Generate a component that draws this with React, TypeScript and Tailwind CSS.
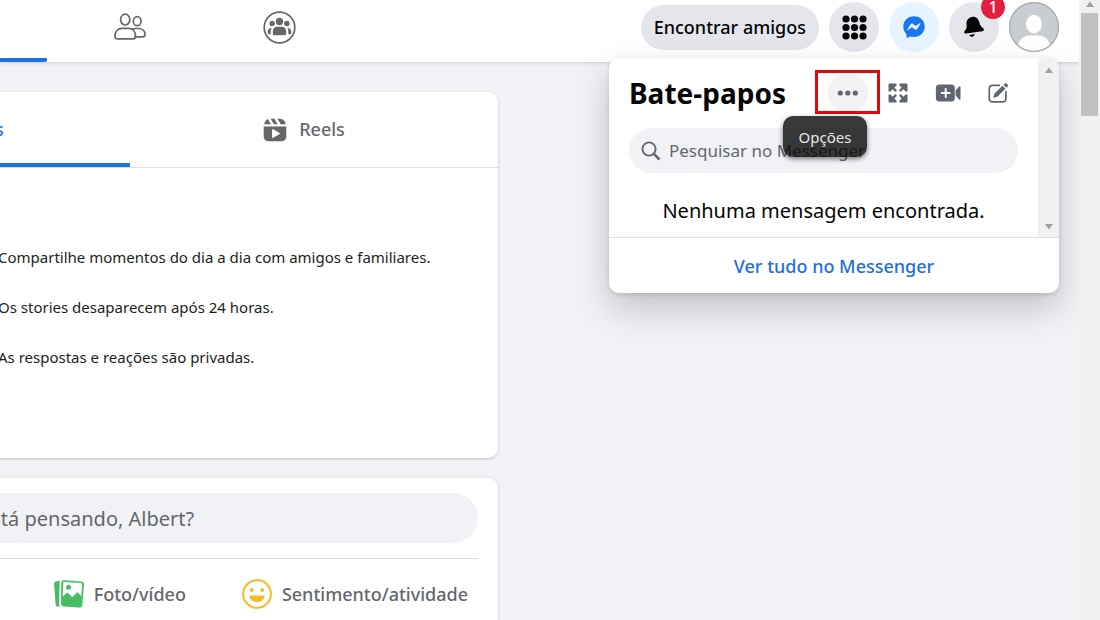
import type { ReactNode } from "react";

function FriendsIcon() {
  return (
    <svg viewBox="0 0 34 30" className="h-[30px] w-[34px]" fill="none" stroke="#65676b" strokeWidth="1.7" strokeLinejoin="round">
      <ellipse cx="12.2" cy="7.6" rx="4.6" ry="5.4" />
      <ellipse cx="24.2" cy="9.2" rx="3.9" ry="4.5" />
      <path d="M9 16.4h6.5c4.200 0 7 3.200 7 7.600 0 2-.7 2.900-2.600 2.900H4.600C2.700 26.900 2 26 2 24c0-4.400 2.800-7.600 7-7.600z" />
      <path d="M19 17.200c.9-.5 2-.7 3.100-.7h3.200c4 0 6.700 2.500 6.700 6 0 1.600-.6 2.300-2.200 2.300h-7.400" />
    </svg>
  );
}

function GroupsIcon() {
  return (
    <svg viewBox="0 0 34 34" className="h-[34px] w-[34px]" fill="#65676b">
      <circle cx="17.500" cy="17.500" r="15.300" fill="none" stroke="#65676b" strokeWidth="1.700" />
      <circle cx="17.500" cy="11.500" r="3.700" />
      <circle cx="10.100" cy="13.500" r="2.700" />
      <circle cx="24.900" cy="13.500" r="2.700" />
      <path d="M15 16.800h5c2.400 0 4.200 2 4.200 4.700v2c0 1.200-.6 1.800-1.800 1.800h-9.800c-1.200 0-1.800-.6-1.800-1.800v-2c0-2.700 1.800-4.700 4.200-4.700z" />
      <path d="M9.600 17.900c-2.300 0-3.900 1.500-3.900 3.800v1.100c0 1 .5 1.400 1.400 1.400h1.600v-2.700c0-1.300.3-2.600.9-3.600zM25.400 17.900c2.300 0 3.900 1.500 3.900 3.800v1.100c0 1-.5 1.400-1.400 1.400h-1.600v-2.700c0-1.300-.3-2.600-.9-3.600z" />
    </svg>
  );
}

function AppsIcon() {
  return (
    <svg viewBox="0 0 26 26" className="h-[26px] w-[26px]" fill="#050505">
      {[5, 13.5, 22].map((y) =>
        [5, 13.5, 22].map((x) => <circle key={x + "-" + y} cx={x} cy={y} r="3.600" />)
      )}
    </svg>
  );
}

function MessengerIcon() {
  return (
    <svg viewBox="0 0 22 22" className="h-[22px] w-[22px]">
      <path fill="#1876f2" d="M11 .3C4.900.3.3 4.800.3 10.500c0 3.100 1.200 5.800 3.200 7.600v2.800c0 .6.6 1 1.100.8l2.700-1.200c1.200.3 2.400.5 3.700.5 6.100 0 10.700-4.600 10.700-10.500S17.100.3 11 .3z" />
      <path fill="#e7f3ff" d="M4.300 13.400l3.300-5.100c.5-.8 1.600-1 2.300-.4l2.500 1.800c.2.200.5.200.8 0l3.400-2.500c.5-.3 1 .2.7.7l-3.200 5c-.5.8-1.600 1-2.300.4l-2.500-1.800c-.2-.2-.5-.2-.8 0L5 14.100c-.5.3-1.100-.2-.7-.7z" />
    </svg>
  );
}

function BellIcon() {
  return (
    <svg viewBox="0 0 22 22" className="h-[22px] w-[22px]" fill="#050505">
      <path d="M8.700 1C5 2 3 5 3.600 8.500c.5 3.200-.2 4.300-1.800 6.200-1.300 1.500-.5 3.100 1.400 2.900L19.300 15.200c1.900-.3 2.200-2 .7-3.200-2-1.600-2.900-2.400-3.600-5.500C15.500 2.500 12.400 0 8.700 1z" />
      <path d="M6.300 18.900l5.400-.8c-.2 1.600-1.200 2.500-2.500 2.600-1.300.2-2.400-.5-2.900-1.800z" />
    </svg>
  );
}

function Avatar() {
  return (
    <svg viewBox="0 0 50 50" className="h-[50px] w-[50px]">
      <defs>
        <clipPath id="avatar-clip"><circle cx="25" cy="25" r="25" /></clipPath>
      </defs>
      <g clipPath="url(#avatar-clip)">
        <rect width="50" height="50" fill="#c9ccd1" />
        <ellipse cx="25" cy="22" rx="8" ry="9.200" fill="#fff" />
        <path fill="#fff" d="M8 50c0-10 5-16.500 12-16.500h10c7 0 12 6.500 12 16.500z" />
      </g>
      <circle cx="25" cy="25" r="24.400" fill="none" stroke="#a9acb1" strokeWidth="1.200" />
    </svg>
  );
}

function ExpandIcon() {
  return (
    <svg viewBox="0 0 20 20" className="h-5 w-5">
      {[0, 90, 180, 270].map((angle) => (
        <g key={angle} transform={"rotate(" + angle + " 10 10)"}>
          <path fill="#5f656e" d="M1.800.5h6.700v1.900L2.400 8.500H.5V1.800C.5 1 1 .5 1.800.5z" />
          <path stroke="#5f656e" strokeWidth="2.400" d="M3 3l5.200 5.200" />
        </g>
      ))}
    </svg>
  );
}

function VideoIcon() {
  return (
    <svg viewBox="0 0 26 20" className="h-5 w-[26px]">
      <path fill="#5f656e" d="M4.200 1.500h12.300c2 0 3.300 1.300 3.300 3.300v10.400c0 2-1.300 3.300-3.300 3.300H4.200c-2 0-3.300-1.300-3.300-3.300V4.800c0-2 1.300-3.300 3.300-3.300z" />
      <path fill="#5f656e" d="M20.600 7.500l3.500-3.900c.5-.6 1.400-.3 1.400.5v11.800c0 .8-.9 1.100-1.400.5l-3.500-3.900z" />
      <path stroke="#fff" strokeWidth="2" strokeLinecap="round" d="M10.700 6v8M6.700 10h8" />
    </svg>
  );
}

function EditIcon() {
  return (
    <svg viewBox="0 0 20 20" className="h-5 w-5" fill="none">
      <path stroke="#5f656e" strokeWidth="1.700" strokeLinecap="round" d="M11.500 2.300H4.700c-2.200 0-3.400 1.200-3.400 3.400v9.800c0 2.200 1.200 3.400 3.400 3.400h9.800c2.200 0 3.400-1.200 3.400-3.400V8.500" />
      <path fill="#5f656e" d="M14.400 2.800l3 3-7.800 7.800-3.500 1.100c-.5.100-.8-.2-.7-.7l1.200-3.400zM15.400 1.800l1.100-1.100c.6-.6 1.500-.6 2.100 0l.9.900c.6.600.6 1.500 0 2.100l-1.100 1.100z" />
    </svg>
  );
}

function SearchIcon() {
  return (
    <svg viewBox="0 0 20 20" className="h-5 w-5 shrink-0" fill="none" stroke="#65676b">
      <circle cx="8" cy="8" r="6.600" strokeWidth="1.900" />
      <path d="M13 13l5.500 5.500" strokeWidth="2.500" />
    </svg>
  );
}

function ReelsIcon({ color }: { color: string }) {
  return (
    <svg viewBox="0 0 24 24" className="h-6 w-6" fill={color}>
      <path d="M.7 8.600h22.600v9.400c0 3.400-2 5.300-5.300 5.300H6C2.700 23.300.7 21.400.7 18z" />
      <path d="M1.200 6.200C1.700 3.600 3 1.900 4.900 1.100l3 5.100zM7.600.7h3.800l3.300 5.500h-3.800zM14.400.7h1.800c3.600 0 5.900 1.900 6.600 5.500h-5.100z" />
      <path fill="#fff" d="M9 12.100c0-.7.700-1.100 1.300-.8l6 3.500c.6.400.6 1.100 0 1.500l-6 3.500c-.6.300-1.300-.1-1.300-.8z" />
    </svg>
  );
}

function PhotoIcon() {
  return (
    <svg viewBox="0 0 30 30" className="h-[30px] w-[30px]">
      <path fill="#45bd62" d="M5.600 1.900L2.300 2.200C.9 2.400 0 3.300.1 4.800l1.500 20.600c.1 1.500 1.100 2.300 2.500 2.200l2-.2c-.8-.7-1-1.700-1-2.800z" />
      <path fill="#45bd62" d="M10 1.300l17 1.100c2.200.2 3.200 1.400 3 3.400l-1.700 20c-.2 2-1.400 3-3.400 2.800l-15-1.200c-2-.2-2.900-1.300-2.800-3.300L7.300 4c.1-1.900 1-2.800 2.700-2.700z" />
      <path fill="#fff" d="M9.800 2.900l16.600 1.100c1.200.1 1.800.7 1.700 1.900l-.8 11.400-3-3.300c-.6-.6-1.300-.6-1.900 0l-4 4.300-4.100-4c-.6-.6-1.200-.6-1.800-.1l-3.700 3.100.5-13c0-1 .1-1.400.5-1.400z" />
      <circle cx="14.500" cy="8.200" r="2.500" fill="#45bd62" />
    </svg>
  );
}

function SmileIcon() {
  return (
    <svg viewBox="0 0 30 30" className="h-[30px] w-[30px]">
      <circle cx="15" cy="15" r="13.900" fill="none" stroke="#f7b928" strokeWidth="2" />
      <circle cx="9.800" cy="11" r="1.900" fill="#f7b928" />
      <circle cx="20.200" cy="11" r="1.900" fill="#f7b928" />
      <path fill="#f7b928" d="M8.300 16.500h13.400c.6 0 1 .4.900 1-.5 3.300-3.600 5.500-7.600 5.500s-7.100-2.200-7.600-5.500c-.1-.6.300-1 .9-1z" />
    </svg>
  );
}

function Arrow({ down = false }: { down?: boolean }) {
  return (
    <svg viewBox="0 0 10 6" className="h-[6px] w-[10px]" fill="#a0a0a0">
      <path d={down ? "M1 0h8L5 5.500z" : "M1 6h8L5 .5z"} />
    </svg>
  );
}

function CircleButton({ label, tone, children }: { label: string; tone: string; children: ReactNode }) {
  return (
    <button aria-label={label} className={"relative flex h-[50px] w-[50px] shrink-0 items-center justify-center rounded-full " + tone}>
      {children}
    </button>
  );
}

function IconButton({ label, children }: { label: string; children: ReactNode }) {
  return (
    <button aria-label={label} className="flex h-10 w-10 items-center justify-center rounded-full">
      {children}
    </button>
  );
}

function Header() {
  return (
    <header className="relative z-10 flex h-[62px] items-start justify-between bg-white pr-5 shadow-[0_1px_4px_rgba(0,0,0,0.16)]">
      <nav className="flex h-full gap-4">
        <a href="#inicio" aria-label="Início" className="w-[47px] rounded-br-xs border-b-4 border-[#1f6fdc]" />
        <a href="#amigos" aria-label="Amigos" className="flex w-[133px] items-start justify-center pt-3">
          <FriendsIcon />
        </a>
        <a href="#grupos" aria-label="Grupos" className="flex w-[133px] items-start justify-center pt-[10px]">
          <GroupsIcon />
        </a>
      </nav>
      <div className="flex items-center gap-[10px] pt-[2px]">
        <button className="h-[45px] rounded-full bg-[#e4e6eb] px-[13px] text-[18px] font-medium">Encontrar amigos</button>
        <CircleButton label="Menu" tone="bg-[#e4e6eb]"><AppsIcon /></CircleButton>
        <CircleButton label="Messenger" tone="bg-[#e7f3ff]"><MessengerIcon /></CircleButton>
        <CircleButton label="Notificações" tone="bg-[#e4e6eb]">
          <BellIcon />
          <span className="absolute -top-[7px] -right-[6px] flex h-6 w-6 items-center justify-center rounded-full bg-[#e41e3f] text-base leading-none font-medium text-white">1</span>
        </CircleButton>
        <CircleButton label="Conta" tone="bg-[#c9ccd1]"><Avatar /></CircleButton>
      </div>
    </header>
  );
}

function ChatMenu() {
  return (
    <section aria-label="Bate-papos" className="absolute top-[58px] right-5 z-20 w-[450px] rounded-[10px] bg-white shadow-[0_15px_35px_rgba(0,0,0,0.2),0_2px_5px_rgba(0,0,0,0.12)]">
      <div className="flex border-b border-[#dcdee2]">
        <div className="flex-1 px-5 pt-[15px] pb-[11px]">
          <div className="flex items-center justify-between">
            <h1 className="text-[28px] leading-10 font-bold">Bate-papos</h1>
            <div className="flex gap-[10px]">
              <div className="relative">
                <button aria-label="Opções" aria-describedby="dica" className="flex h-10 w-10 items-center justify-center rounded-full bg-[#f2f2f2]">
                  <svg viewBox="0 0 22 6" className="h-[6px] w-[22px]" fill="#606770">
                    <circle cx="3.300" cy="3" r="2.600" />
                    <circle cx="10.800" cy="3" r="2.600" />
                    <circle cx="18.300" cy="3" r="2.600" />
                  </svg>
                </button>
                <span className="absolute -top-[3px] -left-[13px] h-11 w-[65px] border-3 border-[#e3060b]" />
                <span id="dica" role="tooltip" className="absolute top-[43px] right-px flex h-[41px] w-[84px] items-center justify-center rounded-[10px] bg-[#080808]/80 pt-px text-[15px] text-[#e4e6eb] shadow-[0_2px_5px_rgba(0,0,0,0.5)]">Opções</span>
              </div>
              <IconButton label="Ver tudo"><ExpandIcon /></IconButton>
              <IconButton label="Nova sala"><VideoIcon /></IconButton>
              <IconButton label="Nova mensagem"><EditIcon /></IconButton>
            </div>
          </div>
          <label className="mt-[15px] flex h-[45px] items-center gap-2 rounded-full bg-[#f0f2f5] px-3">
            <SearchIcon />
            <input type="search" aria-label="Pesquisar no Messenger" placeholder="Pesquisar no Messenger" className="w-full min-w-0 bg-transparent text-[17px] outline-none placeholder:text-[#65676b]" />
          </label>
          <p className="mt-[23px] text-center text-[20px] leading-[30px]">Nenhuma mensagem encontrada.</p>
        </div>
        <div className="flex w-[21px] flex-col items-center justify-between rounded-tr-[10px] bg-[#f1f1f1] pt-[9px] pb-[7px]">
          <Arrow />
          <Arrow down />
        </div>
      </div>
      <a href="#messenger" className="flex h-[55px] items-center justify-center pt-px text-[18px] font-medium text-[#216fdb]">Ver tudo no Messenger</a>
    </section>
  );
}

function StoriesCard() {
  return (
    <section className="h-[366px] rounded-[10px] bg-white shadow-[0_1px_3px_rgba(0,0,0,0.2)]">
      <div className="flex h-[76px] border-b border-[#dcdee2] px-5 text-[18px] font-medium text-[#65676b]">
        <button className="flex flex-1 items-center justify-center gap-3 border-t-4 border-b-4 border-t-transparent border-b-[#1b74e4] text-[#1b74e4]">
          <ReelsIcon color="#1b74e4" />
          Stories
        </button>
        <button className="flex flex-1 items-center justify-center gap-3">
          <ReelsIcon color="#65676b" />
          Reels
        </button>
      </div>
      <ul className="flex flex-col gap-[26px] pt-[77px] pl-[236px] text-[15px] leading-6 text-[#1c1e21]">
        <li>Compartilhe momentos do dia a dia com amigos e familiares.</li>
        <li>Os stories desaparecem após 24 horas.</li>
        <li>As respostas e reações são privadas.</li>
      </ul>
    </section>
  );
}

function Composer() {
  return (
    <section className="rounded-[10px] bg-white px-5 pt-[15px] pb-5 shadow-[0_1px_3px_rgba(0,0,0,0.2)]">
      <button className="ml-[60px] flex h-[50px] w-[636px] items-center rounded-full bg-[#f0f2f5] px-4 pt-[2px] text-[20px] text-[#65676b]">
        No que você está pensando, Albert?
      </button>
      <div className="mt-[15px] flex justify-end gap-14 border-t border-[#dcdee2] pt-5 pr-[10px] text-[18px] font-medium text-[#65676b]">
        <button className="flex h-[30px] items-center gap-[10px]">
          <PhotoIcon />
          Foto/vídeo
        </button>
        <button className="flex h-[30px] items-center gap-[10px]">
          <SmileIcon />
          Sentimento/atividade
        </button>
      </div>
    </section>
  );
}

export default function App() {
  return (
    <div className="flex h-screen overflow-hidden bg-[#f0f2f5] font-['Noto_Sans',sans-serif] text-[#050505]">
      <div className="relative min-w-0 flex-1 overflow-hidden">
        <Header />
        <main className="-ml-[238px] flex w-[736px] flex-col gap-5 pt-[30px]">
          <StoriesCard />
          <Composer />
        </main>
        <ChatMenu />
      </div>
      <div className="flex w-[21px] flex-col items-center gap-[6px] bg-[#f1f1f1] pt-px">
        <Arrow />
        <div className="h-[103px] w-[17px] bg-[#c1c1c1]" />
      </div>
    </div>
  );
}
